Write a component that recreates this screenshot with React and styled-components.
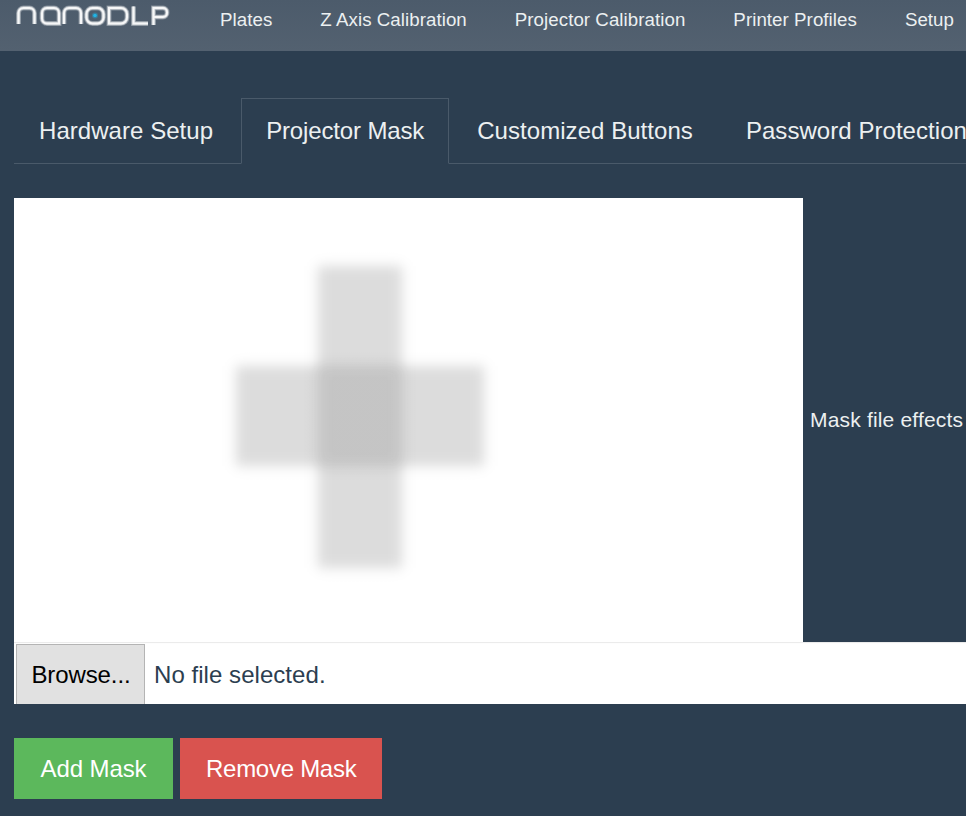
import React from "react";
import styled, { createGlobalStyle } from "styled-components";

const Page = createGlobalStyle`
  html, body {
    margin: 0;
    height: 100%;
    overflow: hidden;
    background: #2c3e50;
    font-family: "Liberation Sans", Arial, sans-serif;
    color: #ecf0f1;
  }
`;

const Navbar = styled.nav`
  height: 51px;
  display: flex;
  background: linear-gradient(#4c5b6b, #536170);
  white-space: nowrap;
  overflow: hidden;
`;

const Logo = styled.svg`
  flex: none;
  width: 196px;
  height: 51px;
`;

const LogoStrokes = styled.g`
  fill: none;
  stroke: #f6f7f8;
  stroke-width: ${(p) => p.$width};
  opacity: ${(p) => p.$opacity};
`;

const LogoDot = styled.circle`
  fill: #1fb4e6;
  opacity: ${(p) => p.$opacity};
`;

const NavLink = styled.a`
  padding: 10px 24px 0;
  font-size: 18.7px;
  letter-spacing: 0.06px;
  line-height: 20px;
  color: #ecf0f1;
`;

const Content = styled.main`
  padding: 47px 0 0 14px;
`;

const Tabs = styled.ul`
  list-style: none;
  display: flex;
  margin: 0;
  padding: 0;
  height: 65px;
  border-bottom: 1px solid #4a5a6a;
  white-space: nowrap;
`;

const Tab = styled.li`
  flex: none;
  box-sizing: border-box;
  height: 66px;
  padding: 18px 24px 0;
  margin-right: 3px;
  font-size: 24px;
  letter-spacing: ${(p) => (p.$active ? "-0.14px" : "0.05px")};
  line-height: 27px;
  border: 1px solid ${(p) => (p.$active ? "#4a5a6a" : "transparent")};
  border-bottom-color: ${(p) => (p.$active ? "#2c3e50" : "transparent")};
`;

const MaskRow = styled.div`
  display: flex;
  margin-top: 34px;
  height: 444px;
`;

const MaskPreview = styled.div`
  flex: none;
  width: 789px;
  background: #fff;
  overflow: hidden;
`;

const MaskDrawing = styled.svg`
  display: block;
  width: 789px;
  height: 444px;
`;

const EffectsLabel = styled.div`
  align-self: center;
  margin: 0 0 0 7px;
  font-size: 21px;
  letter-spacing: 0.18px;
  line-height: 22px;
  white-space: nowrap;
`;

const FileRow = styled.div`
  box-sizing: border-box;
  display: flex;
  align-items: stretch;
  height: 62px;
  padding: 2px 0 0 2px;
  background: #fff;
  box-shadow: inset 0 2px 1px -1px rgba(0, 0, 0, 0.09);
`;

const BrowseButton = styled.button`
  flex: none;
  box-sizing: border-box;
  width: 129px;
  padding: 0 0 0 1px;
  border: 1px solid #b4b4b4;
  border-bottom: 0;
  border-radius: 0;
  background: #e1e1e1;
  color: #000;
  font: 24px "Liberation Sans", Arial, sans-serif;
  letter-spacing: -0.1px;
`;

const FileName = styled.span`
  padding-left: 9px;
  font-size: 24px;
  letter-spacing: 0.05px;
  line-height: 62px;
  color: #2c3e50;
`;

const Actions = styled.div`
  display: flex;
  gap: 7px;
  margin-top: 34px;
`;

const ActionButton = styled.button`
  height: 61px;
  min-width: 159px;
  padding: 0 26px;
  border: 0;
  border-radius: 0;
  background: ${(p) => (p.$danger ? "#d9534f" : "#5cb85c")};
  color: #fff;
  font: 24px "Liberation Sans", Arial, sans-serif;
  letter-spacing: ${(p) => (p.$danger ? "-0.27px" : "-0.1px")};
`;

const navItems = [
  "Plates",
  "Z Axis Calibration",
  "Projector Calibration",
  "Printer Profiles",
  "Setup",
];

const tabItems = [
  "Hardware Setup",
  "Projector Mask",
  "Customized Buttons",
  "Password Protection",
];

const logoShapes = (
  <>
    <path d="M18.500 24V13a5 5 0 0 1 5-5h6a5 5 0 0 1 5 5v11" />
    <path d="M59 23.500H47a5 5 0 0 1-5-5V13a5 5 0 0 1 5-5h7a5 5 0 0 1 5 5z" />
    <path d="M64 24V13a5 5 0 0 1 5-5h7a5 5 0 0 1 5 5v11" />
    <rect x="86.500" y="8" width="17" height="15.500" rx="6" />
    <path d="M109 8h12a6 6 0 0 1 6 6v3.500a6 6 0 0 1-6 6h-12z" />
    <path d="M133.500 6.500v17H148" />
    <path d="M153.500 25V8H163a4 4 0 0 1 4 4v1a4 4 0 0 1-4 4h-9.500" />
  </>
);

const NanoLogo = () => (
  <Logo viewBox="0 0 196 51">
    <LogoStrokes $width={5} $opacity={0.3}>
      {logoShapes}
    </LogoStrokes>
    <LogoStrokes $width={3.4} $opacity={0.55}>
      {logoShapes}
    </LogoStrokes>
    <LogoStrokes $width={2} $opacity={1}>
      {logoShapes}
    </LogoStrokes>
    <LogoDot cx="95" cy="15.500" r="3" $opacity={0.35} />
    <LogoDot cx="95" cy="15.500" r="1.800" $opacity={1} />
  </Logo>
);

// edge profile of a gaussian blur, offsets in px from the shape's edge
const edge = [
  [-16, 0],
  [-12, 0.023],
  [-9, 0.067],
  [-6, 0.159],
  [-3, 0.309],
  [0, 0.5],
  [3, 0.691],
  [6, 0.841],
  [9, 0.933],
  [12, 0.977],
  [16, 1],
];
const reach = 16;

const softStops = (start, end, color, alpha) => {
  const size = end - start + reach * 2;
  const rising = edge.map(([d, v]) => [d + reach, v]);
  const falling = edge.map(([d, v]) => [size - reach + d, 1 - v]);
  return [...rising, ...falling].map(([at, v], i) => (
    <stop key={i} offset={at / size} stopColor={color} stopOpacity={v * alpha} />
  ));
};

// a blurred rect is the product of a soft x profile and a soft y profile
const SoftRect = ({ id, x, y, w, h, color, alpha }) => (
  <>
    <linearGradient
      id={`${id}-x`}
      gradientUnits="userSpaceOnUse"
      x1={x - reach}
      x2={x + w + reach}
      y1="0"
      y2="0"
    >
      {softStops(x, x + w, color, alpha)}
    </linearGradient>
    <linearGradient
      id={`${id}-y`}
      gradientUnits="userSpaceOnUse"
      x1="0"
      x2="0"
      y1={y - reach}
      y2={y + h + reach}
    >
      {softStops(y, y + h, "#fff", 1)}
    </linearGradient>
    <mask
      id={`${id}-m`}
      maskUnits="userSpaceOnUse"
      x={x - reach}
      y={y - reach}
      width={w + reach * 2}
      height={h + reach * 2}
    >
      <rect
        x={x - reach}
        y={y - reach}
        width={w + reach * 2}
        height={h + reach * 2}
        fill={`url(#${id}-y)`}
      />
    </mask>
    <rect
      x={x - reach}
      y={y - reach}
      width={w + reach * 2}
      height={h + reach * 2}
      fill={`url(#${id}-x)`}
      mask={`url(#${id}-m)`}
    />
  </>
);

const App = () => {
  return (
    <>
      <Page />
      <Navbar>
        <NanoLogo />
        {navItems.map((item) => (
          <NavLink key={item}>{item}</NavLink>
        ))}
      </Navbar>
      <Content>
        <Tabs>
          {tabItems.map((item) => (
            <Tab key={item} $active={item === "Projector Mask"}>
              {item}
            </Tab>
          ))}
        </Tabs>
        <MaskRow>
          <MaskPreview>
            <MaskDrawing viewBox="0 0 789 444">
              <SoftRect id="upright" x={304} y={68} w={84} h={302} color="#000" alpha={0.137} />
              <SoftRect id="arm" x={222} y={168} w={248} h={100} color="#000" alpha={0.137} />
              <SoftRect id="middle" x={304} y={168} w={84} h={100} color="#fff" alpha={0.12} />
            </MaskDrawing>
          </MaskPreview>
          <EffectsLabel>Mask file effects</EffectsLabel>
        </MaskRow>
        <FileRow>
          <BrowseButton type="button">Browse...</BrowseButton>
          <FileName>No file selected.</FileName>
        </FileRow>
        <Actions>
          <ActionButton type="button">Add Mask</ActionButton>
          <ActionButton type="button" $danger>
            Remove Mask
          </ActionButton>
        </Actions>
      </Content>
    </>
  );
};

export default App;
